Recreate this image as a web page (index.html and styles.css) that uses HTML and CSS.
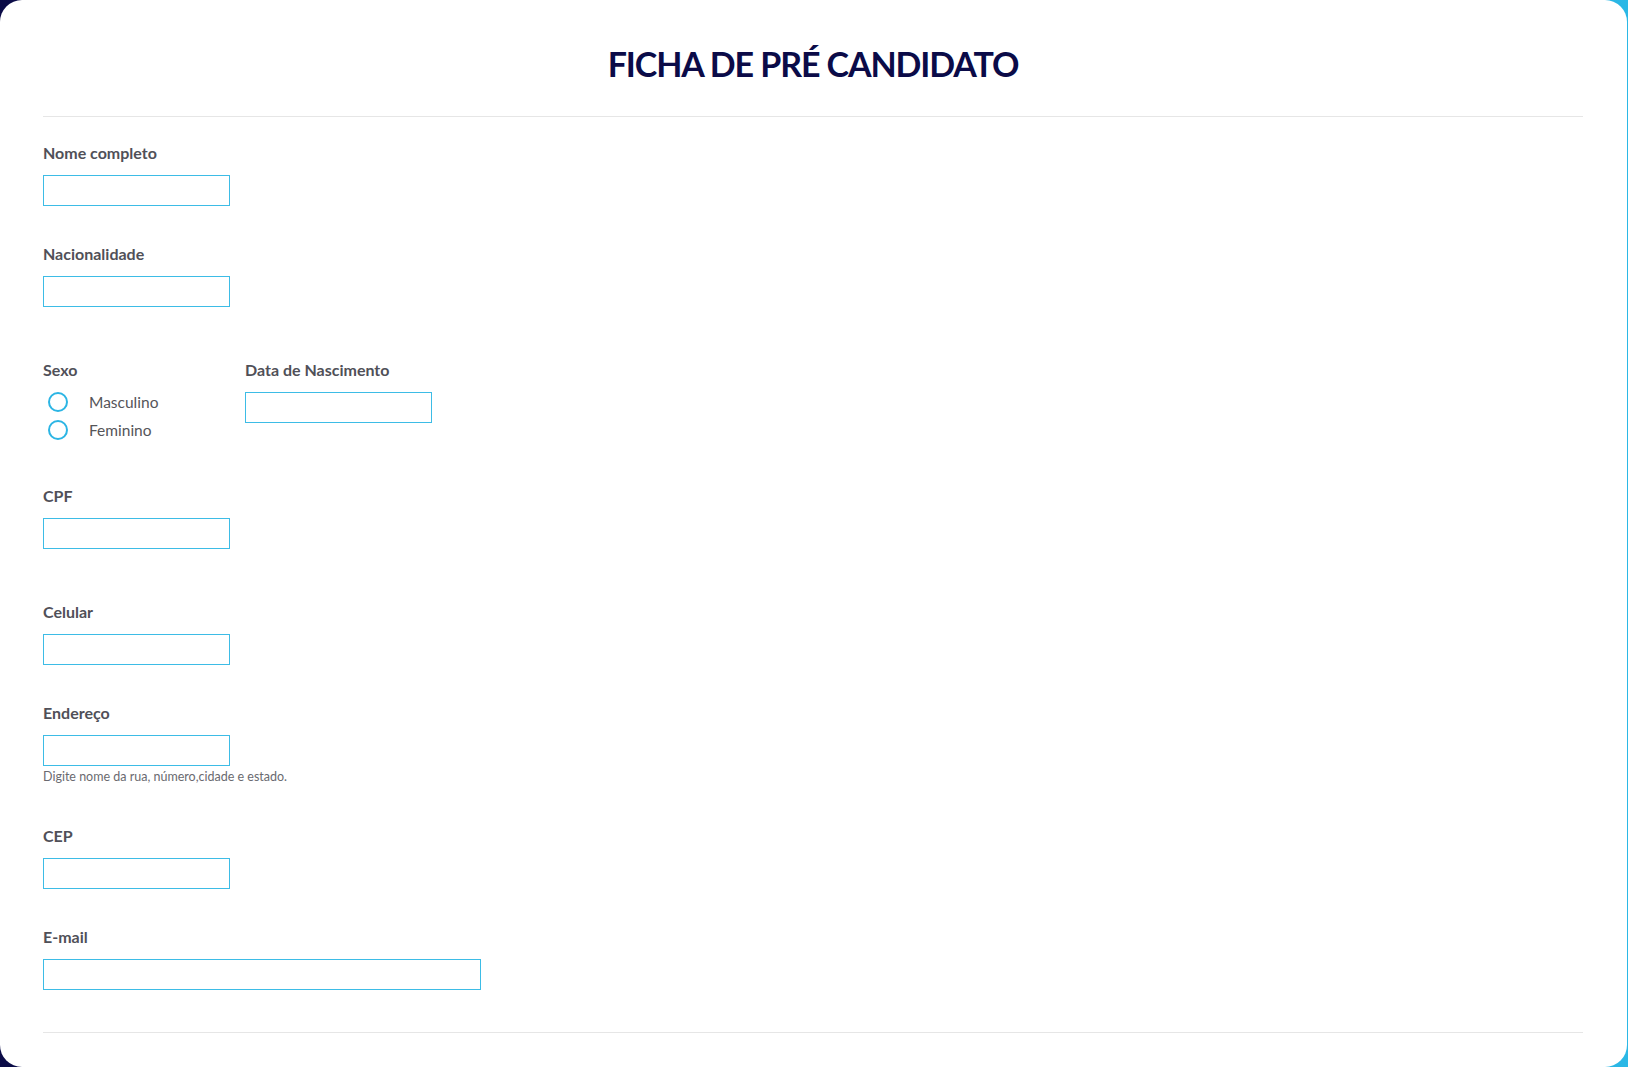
FILE: index.html
```html
<!DOCTYPE html>
<html lang="pt-BR">
<head>
    <meta charset="UTF-8">
    <title>Ficha de Pré Candidato</title>

    <link rel="stylesheet" href="styles.css">

</head>
<body>

<div class="card">

    <div class="header">
        <h1>FICHA DE PRÉ CANDIDATO</h1>
    </div>

    <form class="form">

        <div class="field">
            <label for="nome">Nome completo</label>
            <input id="nome" type="text">
        </div>

        <div class="field gap-big">
            <label for="nacionalidade">Nacionalidade</label>
            <input id="nacionalidade" type="text">
        </div>

        <div class="row gap-row">
            <div class="field sexo">
                <label>Sexo</label>
                <div class="radios">
                    <div class="radio"><span class="circle"></span>Masculino</div>
                    <div class="radio"><span class="circle"></span>Feminino</div>
                </div>
            </div>
            <div class="field">
                <label for="nascimento">Data de Nascimento</label>
                <input id="nascimento" type="text">
            </div>
        </div>

        <div class="field gap-big">
            <label for="cpf">CPF</label>
            <input id="cpf" type="text">
        </div>

        <div class="field">
            <label for="celular">Celular</label>
            <input id="celular" type="text">
        </div>

        <div class="field gap-hint">
            <label for="endereco">Endereço</label>
            <input id="endereco" type="text">
            <span class="hint">Digite nome da rua, número,cidade e estado.</span>
        </div>

        <div class="field">
            <label for="cep">CEP</label>
            <input id="cep" type="text">
        </div>

        <div class="field last">
            <label for="email">E-mail</label>
            <input id="email" type="email" class="wide">
        </div>

    </form>

</div>

</body>
</html>
```

FILE: styles.css
```css
* {
    box-sizing: border-box;
}

html, body {
    margin: 0;
    height: 100%;
}

body {
    background: linear-gradient(90deg, #0b0b47 0%, #1d6fa6 60%, #2bb8e6 100%);
    font-family: Lato, "Noto Sans", sans-serif;
}

.card {
    height: 100vh;
    margin-right: 1px;
    background-color: white;
    border-radius: 22px;
    padding: 0 44px 0 43px;
}

.header {
    border-bottom: 1px solid #e6e6e6;
    height: 117px;
    padding-top: 44px;
}

.header h1 {
    margin: 0;
    text-align: center;
    font-size: 34px;
    line-height: 40px;
    letter-spacing: -1.1px;
    font-weight: 700;
    color: #0b0b48;
}

.form {
    padding-top: 26px;
    border-bottom: 1px solid #e6e6e6;
}

.field {
    display: flex;
    flex-direction: column;
    align-items: flex-start;
    margin-bottom: 38px;
}

.field.gap-big {
    margin-bottom: 53px;
}

.field.gap-hint {
    margin-bottom: 41px;
}

.field.last {
    margin-bottom: 42px;
}

.row {
    display: flex;
    margin-bottom: 42px;
}

.row .field {
    margin-bottom: 0;
}

.sexo {
    width: 202px;
}

label {
    display: block;
    font-size: 16px;
    line-height: 20px;
    font-weight: 700;
    color: #505058;
    margin-bottom: 12px;
}

input {
    width: 187px;
    height: 31px;
    border: 1px solid #3dbce6;
    background: white;
    margin: 0;
    padding: 4px 8px;
    font-family: inherit;
    font-size: 15px;
}

input.wide {
    width: 438px;
}

.hint {
    font-size: 12.5px;
    line-height: 16px;
    color: #6a6a70;
    margin-top: 3px;
}

.radios {
    margin-top: -4px;
    padding-left: 5px;
}

.radio {
    display: flex;
    align-items: center;
    height: 28px;
    font-size: 15.5px;
    color: #555559;
}

.circle {
    width: 20px;
    height: 20px;
    border: 2px solid #2cb5e4;
    border-radius: 50%;
    margin-right: 21px;
}
```
